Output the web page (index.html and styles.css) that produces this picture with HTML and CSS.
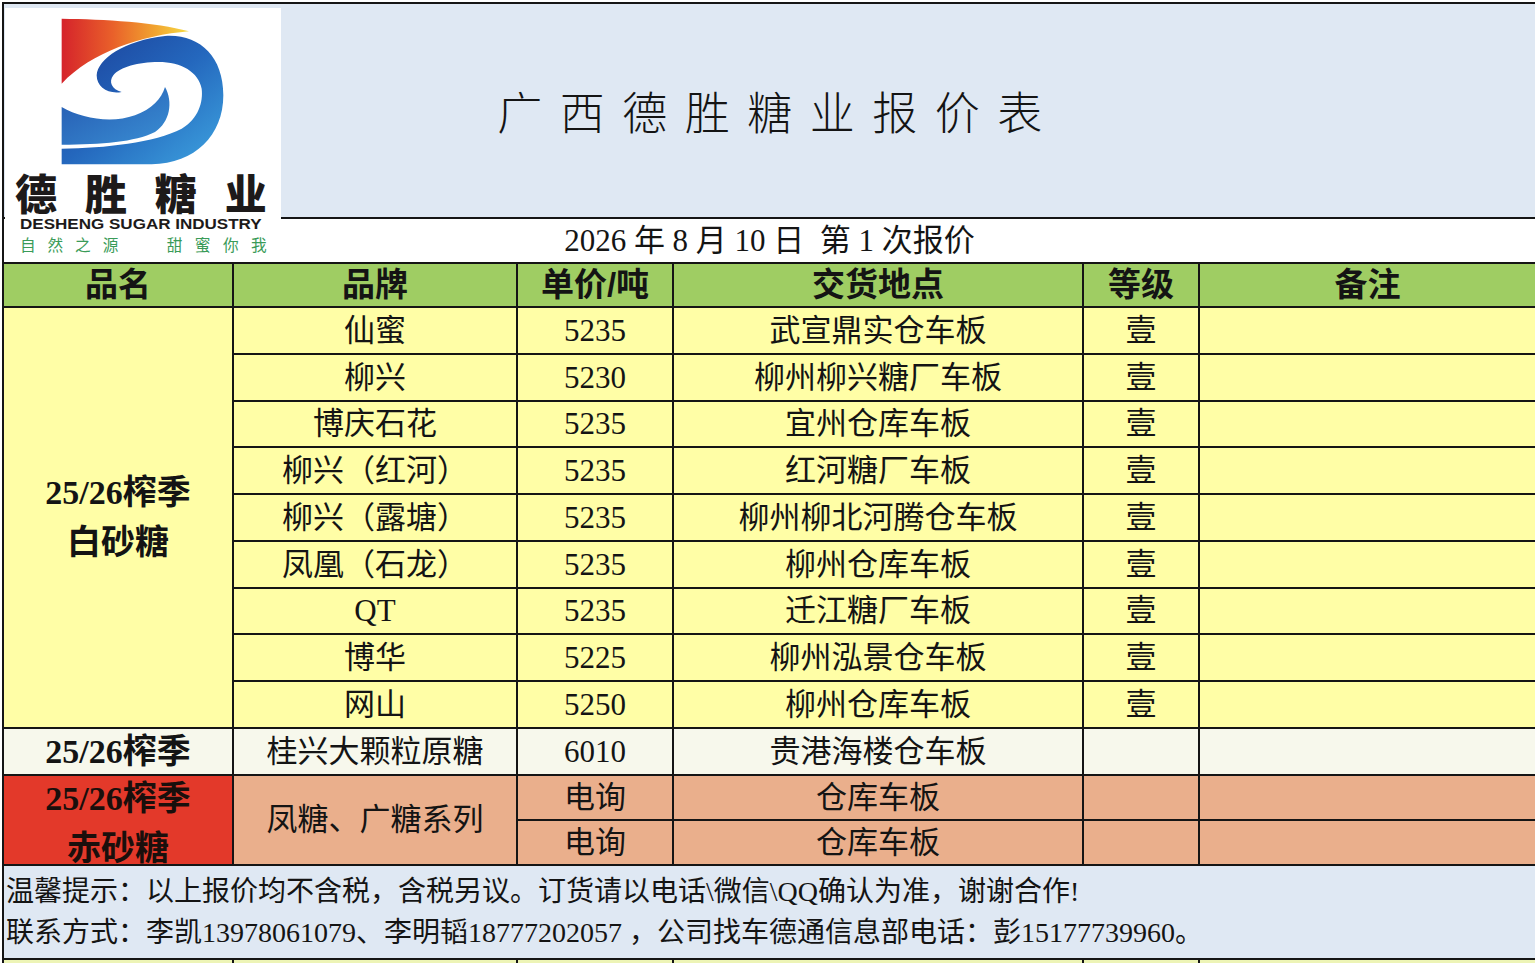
FILE: index.html
```html
<!DOCTYPE html>
<html lang="zh-CN">
<head>
<meta charset="utf-8">
<title>广西德胜糖业报价表</title>
<link rel="stylesheet" href="styles.css">
</head>
<body>
<div class="sheet">
  <div class="logo">
    <svg class="logo-svg" viewBox="15 24 828 759" width="276" height="253" xmlns="http://www.w3.org/2000/svg">
      <defs>
        <linearGradient id="gRed" x1="0" y1="0" x2="1" y2="0">
          <stop offset="0" stop-color="#d5232b"/>
          <stop offset="0.4" stop-color="#e9602a"/>
          <stop offset="0.72" stop-color="#f1a12f"/>
          <stop offset="1" stop-color="#f6dc46"/>
        </linearGradient>
        <linearGradient id="gBlue" x1="0" y1="0" x2="1" y2="1">
          <stop offset="0" stop-color="#1b3f98"/>
          <stop offset="0.5" stop-color="#2467bd"/>
          <stop offset="1" stop-color="#3ea4e0"/>
        </linearGradient>
        <linearGradient id="gBlue2" x1="0" y1="0" x2="1" y2="1">
          <stop offset="0" stop-color="#2458b0"/>
          <stop offset="1" stop-color="#3a8fd4"/>
        </linearGradient>
      </defs>
      <g transform="translate(165,36)">
        <path fill="url(#gRed)" d="M20,20 C150,22 300,30 402,58 C260,70 110,120 20,215 Z"/>
        <path fill="url(#gBlue)" d="M20,410 C150,408 300,392 380,350 C430,320 445,270 440,230 C430,180 380,150 310,150 C250,150 195,165 175,190 C160,210 170,232 200,240 C160,248 125,225 125,190 C128,140 210,85 330,72 C430,65 505,130 505,250 C505,370 420,455 290,457 L20,457 Z"/>
        <path fill="url(#gBlue2)" d="M20,285 C80,320 170,335 240,310 C290,292 320,260 330,225 C355,270 345,330 300,360 C240,390 140,398 20,398 Z"/>
      </g>
      <text class="lg-cn" x="45" y="630" textLength="755" lengthAdjust="spacing">德胜糖业</text>
      <text class="lg-en" x="60" y="688" textLength="725" lengthAdjust="spacingAndGlyphs">DESHENG SUGAR INDUSTRY</text>
      <text class="lg-sl" x="60" y="752" textLength="295" lengthAdjust="spacing">自然之源</text>
      <text class="lg-sl" x="500" y="752" textLength="300" lengthAdjust="spacing">甜蜜你我</text>
    </svg>
  </div>

  <div class="title">广西德胜糖业报价表</div>
  <div class="date">2026 年 8 月 10 日 &nbsp;第 1 次报价</div>

  <div class="grid">
    <div class="c h">品名</div>
    <div class="c h">品牌</div>
    <div class="c h">单价/吨</div>
    <div class="c h">交货地点</div>
    <div class="c h">等级</div>
    <div class="c h last">备注</div>

    <div class="c y lbl span9">25/26榨季<br>白砂糖</div>
    <div class="c y">仙蜜</div><div class="c y">5235</div><div class="c y">武宣鼎实仓车板</div><div class="c y">壹</div><div class="c y last"></div>
    <div class="c y">柳兴</div><div class="c y">5230</div><div class="c y">柳州柳兴糖厂车板</div><div class="c y">壹</div><div class="c y last"></div>
    <div class="c y">博庆石花</div><div class="c y">5235</div><div class="c y">宜州仓库车板</div><div class="c y">壹</div><div class="c y last"></div>
    <div class="c y">柳兴（红河）</div><div class="c y">5235</div><div class="c y">红河糖厂车板</div><div class="c y">壹</div><div class="c y last"></div>
    <div class="c y">柳兴（露塘）</div><div class="c y">5235</div><div class="c y">柳州柳北河腾仓车板</div><div class="c y">壹</div><div class="c y last"></div>
    <div class="c y">凤凰（石龙）</div><div class="c y">5235</div><div class="c y">柳州仓库车板</div><div class="c y">壹</div><div class="c y last"></div>
    <div class="c y">QT</div><div class="c y">5235</div><div class="c y">迁江糖厂车板</div><div class="c y">壹</div><div class="c y last"></div>
    <div class="c y">博华</div><div class="c y">5225</div><div class="c y">柳州泓景仓车板</div><div class="c y">壹</div><div class="c y last"></div>
    <div class="c y">网山</div><div class="c y">5250</div><div class="c y">柳州仓库车板</div><div class="c y">壹</div><div class="c y last"></div>

    <div class="c w lbl">25/26榨季</div>
    <div class="c w">桂兴大颗粒原糖</div><div class="c w">6010</div><div class="c w">贵港海楼仓车板</div><div class="c w"></div><div class="c w last"></div>

    <div class="c r lbl red span2">25/26榨季<br>赤砂糖</div>
    <div class="c s span2">凤糖、广糖系列</div>
    <div class="c s">电询</div><div class="c s">仓库车板</div><div class="c s"></div><div class="c s last"></div>
    <div class="c s">电询</div><div class="c s">仓库车板</div><div class="c s"></div><div class="c s last"></div>
  </div>

  <div class="foot">
    <div>温馨提示：以上报价均不含税，含税另议。订货请以电话\微信\QQ确认为准，谢谢合作!</div>
    <div>联系方式：李凯13978061079、李明韬18777202057 ，公司找车德通信息部电话：彭15177739960。</div>
  </div>

  <div class="strip">
    <div></div><div></div><div></div><div></div><div></div><div class="last"></div>
  </div>
</div>
</body>
</html>
```

FILE: styles.css
```css
*, *::before, *::after { box-sizing: border-box; }

html, body {
  margin: 0;
  padding: 0;
  overflow: hidden;
  background: #ffffff;
}

body {
  font-family: "Liberation Serif", "Noto Sans CJK SC", serif;
  color: #141414;
}

.sheet {
  position: relative;
  margin: 2px 0 0 2px;
  border-left: 2px solid #151515;
  border-top: 2px solid #151515;
}

.logo {
  position: absolute;
  left: 1px;
  top: 4px;
  width: 276px;
  height: 253px;
  background: #ffffff;
  z-index: 2;
}

.logo-svg { display: block; }

.lg-cn {
  font-family: "Noto Sans CJK SC", sans-serif;
  font-weight: 900;
  font-size: 126px;
  fill: #1d1a1a;
}

.lg-en {
  font-family: "Liberation Sans", Arial, sans-serif;
  font-weight: 700;
  font-size: 45px;
  fill: #1d1a1a;
}

.lg-sl {
  font-family: "Noto Sans CJK SC", sans-serif;
  font-size: 47px;
  fill: #3a9b58;
}

.title {
  height: 215px;
  background: #dfe8f3;
  border-bottom: 2px solid #151515;
  display: flex;
  align-items: center;
  justify-content: center;
  padding-left: 18px;
  font-family: "Noto Sans CJK SC", sans-serif;
  font-weight: 300;
  font-size: 45px;
  letter-spacing: 17.5px;
  line-height: 1;
}

.date {
  height: 45px;
  border-bottom: 2px solid #151515;
  display: flex;
  align-items: center;
  justify-content: center;
  font-size: 31px;
  line-height: 1;
  background: #ffffff;
}

.grid {
  display: grid;
  grid-template-columns: 230px 284px 156px 410px 116px 1fr;
  grid-template-rows: 44px 47px 47px 46px 47px 47px 47px 46px 47px 47px 47px 45px 45px;
}

.c {
  border-right: 2px solid #151515;
  border-bottom: 2px solid #151515;
  display: flex;
  align-items: center;
  justify-content: center;
  text-align: center;
  white-space: nowrap;
  overflow: hidden;
  font-size: 31px;
  line-height: 1.2;
}

.last { border-right: none; }

.span9 { grid-row: span 9; }
.span2 { grid-row: span 2; }

.h {
  background: #9fcd63;
  font-family: "Liberation Sans", "Noto Sans CJK SC", sans-serif;
  font-weight: 700;
  font-size: 33px;
}

.y { background: #fffea6; }
.w { background: #f7f8ec; }
.s { background: #eaaf8c; }
.r { background: #e3392a; }

.lbl {
  font-weight: 700;
  font-size: 34px;
  line-height: 50px;
}

.red {
  padding-top: 8px;
  color: #1a0f0c;
}

.foot {
  height: 94px;
  background: #dfe8f3;
  border-bottom: 2px solid #151515;
  padding: 5px 0 0 2px;
  font-size: 28px;
  line-height: 41px;
  white-space: nowrap;
}

.strip {
  display: grid;
  grid-template-columns: 230px 284px 156px 410px 116px 1fr;
  height: 12px;
  background: #edf4b6;
}

.strip div { border-right: 2px solid #151515; }
.strip .last { border-right: none; }
```
